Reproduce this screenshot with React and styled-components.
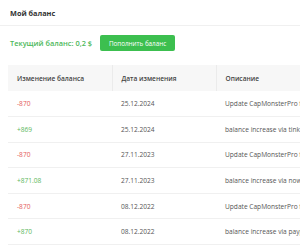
import React from 'react'
import styled, { createGlobalStyle } from 'styled-components';

const GlobalStyle = createGlobalStyle`
  * { box-sizing: border-box; }
  body {
    margin: 0;
    background: #fff;
    font-family: "Open Sans", "Liberation Sans", sans-serif;
    color: #555;
    overflow: hidden;
  }
`;

const rows = [
  { amount: '-870', date: '25.12.2024', text: 'Update CapMonsterPro for 1 month' },
  { amount: '+869', date: '25.12.2024', text: 'balance increase via tinkoff' },
  { amount: '-870', date: '27.11.2023', text: 'Update CapMonsterPro for 1 month' },
  { amount: '+871.08', date: '27.11.2023', text: 'balance increase via nowpayments' },
  { amount: '-870', date: '08.12.2022', text: 'Update CapMonsterPro for 1 month' },
  { amount: '+870', date: '08.12.2022', text: 'balance increase via paypal' },
];

function App() {
  return (
    <>
      <GlobalStyle />
      <Page>
        <Header>
          <h2>Мой баланс</h2>
        </Header>
        <BalanceBar>
          <Current>Текущий баланс: 0,2 $</Current>
          <TopUp>Пополнить баланс</TopUp>
        </BalanceBar>
        <TableWrap>
          <Table>
            <thead>
              <tr>
                <Th $w={104}>Изменение баланса</Th>
                <Th $w={104}>Дата изменения</Th>
                <Th $w={200}>Описание</Th>
              </tr>
            </thead>
            <tbody>
              {rows.map((r, i) => (
                <tr key={i}>
                  <Td>
                    <Amount $plus={r.amount.startsWith('+')}>{r.amount}</Amount>
                  </Td>
                  <Td>{r.date}</Td>
                  <Td>{r.text}</Td>
                </tr>
              ))}
            </tbody>
          </Table>
        </TableWrap>
      </Page>
    </>
  )
}

const Page = styled.div`
  width: 300px;
  height: 249px;
  overflow: hidden;
`;

const Header = styled.div`
  height: 26px;
  padding: 0 10px;
  display: flex;
  align-items: center;
  border-bottom: 1px solid #f0f0f0;

  h2 {
    margin: 0;
    font-size: 7.3px;
    font-weight: 700;
    color: #333;
  }
`;

const BalanceBar = styled.div`
  display: flex;
  align-items: flex-start;
  gap: 8px;
  padding: 9px 10px 0;
  height: 39px;
`;

const Current = styled.span`
  font-size: 7.4px;
  font-weight: 600;
  color: #4cb85a;
  line-height: 16px;
`;

const TopUp = styled.button`
  height: 16px;
  width: 75px;
  padding: 0;
  border: none;
  border-radius: 2px;
  background: #3cbf4f;
  color: #fff;
  font-family: inherit;
  font-size: 6.3px;
  cursor: pointer;
`;

const TableWrap = styled.div`
  margin-left: 8px;
  width: 420px;
`;

const Table = styled.table`
  border-collapse: collapse;
  table-layout: fixed;
  width: 408px;
  font-size: 6.6px;
  white-space: nowrap;
`;

const Th = styled.th`
  width: ${p => p.$w}px;
  height: 26px;
  padding: 0 9px;
  text-align: left;
  font-weight: 600;
  color: #444;
  background: #f7f7f7;
  & + & { border-left: 1px solid #ebebeb; }
`;

const Td = styled.td`
  height: 25.6px;
  padding: 0 9px;
  color: #555;
  border-bottom: 1px solid #f0f0f0;
  overflow: hidden;
`;

const Amount = styled.span`
  color: ${p => (p.$plus ? '#5cb85c' : '#e45a5a')};
`;

export default App;
